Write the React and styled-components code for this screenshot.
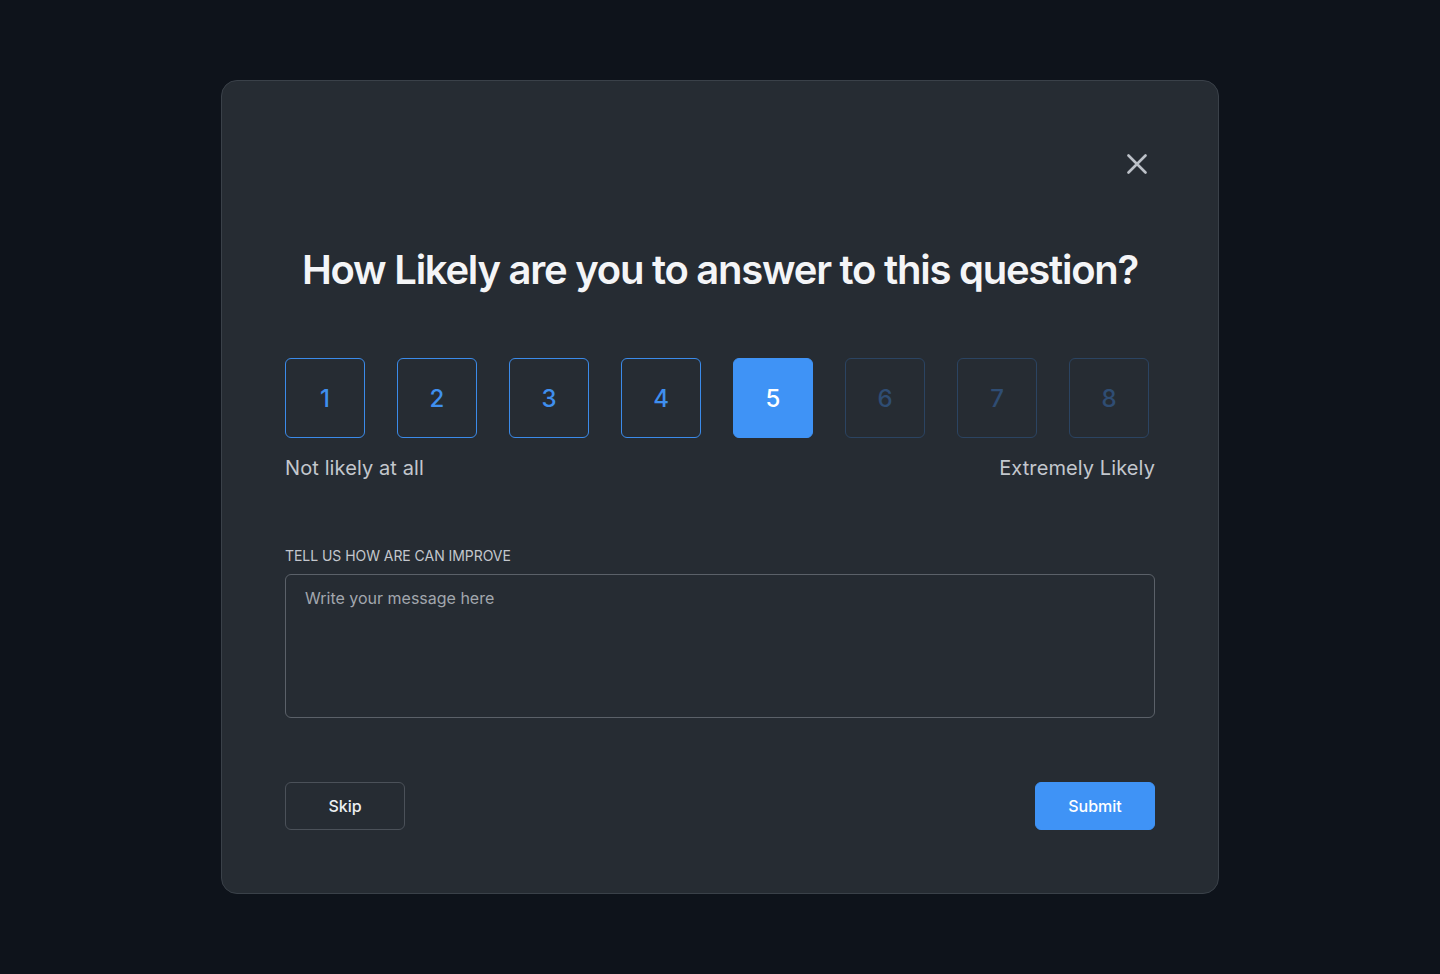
import React, { useState } from 'react';
import styled, { createGlobalStyle } from 'styled-components';

const GlobalStyle = createGlobalStyle`
  html, body {
    margin: 0;
    padding: 0;
    background: #0e131b;
  }
  body {
    font-family: Inter, "Noto Sans", sans-serif;
    -webkit-font-smoothing: antialiased;
  }
`;

const Page = styled.div`
  min-height: 974px;
  display: flex;
  justify-content: center;
  padding-top: 80px;
  box-sizing: border-box;
`;

const Modal = styled.div`
  width: 998px;
  height: 814px;
  box-sizing: border-box;
  background: #262c33;
  border: 1px solid #3a4149;
  border-radius: 16px;
  padding: 63px 63px;
  display: flex;
  flex-direction: column;
`;

const CloseRow = styled.div`
  display: flex;
  justify-content: flex-end;
  height: 40px;
  align-items: center;
`;

const CloseButton = styled.button`
  background: none;
  border: 0;
  padding: 0;
  margin-right: 8px;
  width: 20px;
  height: 20px;
  cursor: pointer;
  color: #bcc1c8;
  display: flex;
`;

const Title = styled.h1`
  margin: 62px 0 0;
  text-align: center;
  font-size: 40px;
  line-height: 48px;
  font-weight: 600;
  letter-spacing: -1.25px;
  color: #f4f5f7;
`;

const Scale = styled.div`
  display: flex;
  gap: 32px;
  margin-top: 64px;
`;

const ScoreBox = styled.button`
  width: 80px;
  height: 80px;
  box-sizing: border-box;
  border-radius: 6px;
  font-family: inherit;
  font-size: 24px;
  font-weight: 500;
  cursor: pointer;
  border: 1px solid ${({ $state }) =>
    $state === 'active' ? '#3f93f6' : $state === 'muted' ? '#2b4462' : '#3b8bea'};
  background: ${({ $state }) => ($state === 'active' ? '#3f93f6' : 'transparent')};
  color: ${({ $state }) =>
    $state === 'active' ? '#ffffff' : $state === 'muted' ? '#2f4d73' : '#3f8fef'};
`;

const ScaleLabels = styled.div`
  display: flex;
  justify-content: space-between;
  margin-top: 16px;
  font-size: 20px;
  line-height: 28px;
  letter-spacing: 0.1px;
  color: #c3c7cd;
`;

const FieldLabel = styled.label`
  display: block;
  margin-top: 64px;
  font-size: 14px;
  line-height: 20px;
  color: #c3c7cd;
  letter-spacing: -0.05px;
`;

const MessageInput = styled.textarea`
  margin-top: 8px;
  height: 144px;
  box-sizing: border-box;
  width: 100%;
  resize: none;
  background: transparent;
  border: 1px solid #5b6169;
  border-radius: 6px;
  padding: 12px 19px;
  font-family: inherit;
  font-size: 16px;
  line-height: 22px;
  color: #e5e7ea;
  outline: none;
  &::placeholder {
    color: #a2a7ae;
  }
`;

const Actions = styled.div`
  display: flex;
  justify-content: space-between;
  margin-top: 64px;
`;

const ActionButton = styled.button`
  width: 120px;
  height: 48px;
  box-sizing: border-box;
  border-radius: 6px;
  font-family: inherit;
  font-size: 16px;
  font-weight: 500;
  cursor: pointer;
  border: 1px solid ${({ $primary }) => ($primary ? '#3f93f6' : '#4b5159')};
  background: ${({ $primary }) => ($primary ? '#3f93f6' : 'transparent')};
  color: ${({ $primary }) => ($primary ? '#ffffff' : '#eef0f2')};
`;

const CloseIcon = () => (
  <svg width="20" height="20" viewBox="0 0 20 20" fill="none">
    <path d="M1.5 1.5L18.5 18.5M18.5 1.5L1.5 18.5" stroke="currentColor" strokeWidth="2.6" strokeLinecap="round" />
  </svg>
);

const scores = [1, 2, 3, 4, 5, 6, 7, 8];

export default function App() {
  const [selected, setSelected] = useState(5);

  const stateFor = (n) => {
    if (n === selected) return 'active';
    if (n > selected) return 'muted';
    return 'default';
  };

  return (
    <>
      <GlobalStyle />
      <Page>
        <Modal>
          <CloseRow>
            <CloseButton aria-label="Close">
              <CloseIcon />
            </CloseButton>
          </CloseRow>
          <Title>How Likely are you to answer to this question?</Title>
          <Scale>
            {scores.map((n) => (
              <ScoreBox key={n} $state={stateFor(n)} onClick={() => setSelected(n)}>
                {n}
              </ScoreBox>
            ))}
          </Scale>
          <ScaleLabels>
            <span>Not likely at all</span>
            <span>Extremely Likely</span>
          </ScaleLabels>
          <FieldLabel htmlFor="message">TELL US HOW ARE CAN IMPROVE</FieldLabel>
          <MessageInput id="message" placeholder="Write your message here" />
          <Actions>
            <ActionButton>Skip</ActionButton>
            <ActionButton $primary>Submit</ActionButton>
          </Actions>
        </Modal>
      </Page>
    </>
  );
}
